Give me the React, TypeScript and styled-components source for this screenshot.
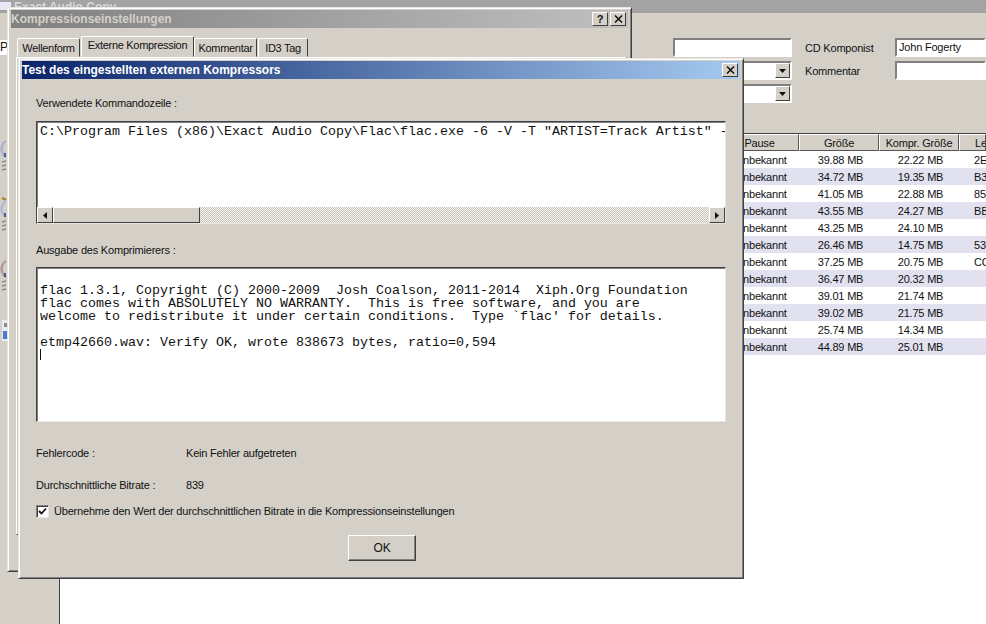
import { ReactElement } from 'react';
import styled, { createGlobalStyle } from 'styled-components';

const GlobalStyle = createGlobalStyle`
  html, body {
    margin: 0;
    padding: 0;
    background: #d4d0c8;
  }
  body {
    width: 986px;
    height: 624px;
    overflow: hidden;
    font-family: "Liberation Sans", Arial, sans-serif;
    font-size: 11px;
    letter-spacing: -0.2px;
    color: #111;
  }
`;

const Desktop = styled.div`
  position: relative;
  width: 986px;
  height: 624px;
  overflow: hidden;
  background: #d4d0c8;
`;

/* background window */
const MainWindow = styled.div`
  display: flex;
  flex-direction: column;
  height: 100%;
`;

const MainTitle = styled.div`
  height: 13px;
  flex: none;
  display: flex;
  align-items: center;
  gap: 3px;
  background: #a3a3a3;
  color: #d8d8d8;
  font-size: 12px;
  font-weight: 700;
  letter-spacing: 0;
  overflow: hidden;
`;

const MainBody = styled.div`
  flex: 1;
  display: flex;
  min-height: 0;
`;

const Sidebar = styled.div`
  width: 59px;
  flex: none;
  display: flex;
  flex-direction: column;
  overflow: hidden;
`;

const SideField = styled.div`
  width: 7px;
  height: 15px;
  margin-top: 27px;
  background: #fff;
  font-size: 12px;
  line-height: 15px;
`;

const SideIcons = styled.div`
  display: flex;
  flex-direction: column;
  gap: 22px;
  margin-top: 82px;
`;

const MainContent = styled.div`
  flex: 1;
  display: flex;
  flex-direction: column;
  min-width: 0;
`;

const FormArea = styled.div`
  height: 120px;
  box-sizing: border-box;
  flex: none;
  padding: 25px 0 0 614px;
  display: grid;
  grid-template-columns: 119px 13px 90px 91px;
  grid-template-rows: 19px 19px 19px;
  row-gap: 4px;
  align-items: center;
`;

const SunkenField = styled.div`
  height: 19px;
  box-sizing: border-box;
  background: #fff;
  border: 2px solid;
  border-color: #808080 #fff #fff #808080;
  padding-left: 2px;
  line-height: 15px;
  white-space: nowrap;
  overflow: hidden;
  display: flex;
  align-items: center;
  justify-content: flex-end;
`;

const FieldText = styled.span`
  flex: 1;
`;

const DropButton = styled.span`
  width: 15px;
  height: 15px;
  flex: none;
  background: #d4d0c8;
  border: 1px solid;
  border-color: #fff #404040 #404040 #fff;
  box-sizing: border-box;
  display: flex;
  align-items: center;
  justify-content: center;
`;

const FormLabel = styled.div`
  white-space: nowrap;
`;

const FormSpacer = styled.div`
  grid-column: span 3;
`;

const TrackList = styled.div`
  flex: 1;
  background: #fff;
  border-left: 1px solid #404040;
  border-top: 1px solid #404040;
`;

const TrackRowGrid = styled.div<{ $shade?: boolean }>`
  display: grid;
  grid-template-columns: 660px 79px 80px 80px 1fr;
  height: 17px;
  line-height: 17px;
  text-align: center;
  white-space: nowrap;
  overflow: hidden;
  background: ${p => (p.$shade ? '#e1e1f0' : '#fff')};
`;

const HeaderRow = styled(TrackRowGrid)`
  background: #d4d0c8;
  line-height: 17px;
`;

const HeaderCell = styled.div<{ $align?: 'left' | 'center' }>`
  box-sizing: border-box;
  border: 1px solid;
  border-color: #fff #555 #555 #fff;
  text-align: ${p => p.$align ?? 'center'};
  padding-left: ${p => (p.$align === 'left' ? '15px' : '0')};
  overflow: hidden;
`;

const Cell = styled.div<{ $align?: 'left' | 'center' }>`
  padding-top: 1px;
  text-align: ${p => p.$align ?? 'center'};
  padding-left: ${p => (p.$align === 'left' ? '15px' : '3px')};
`;

/* floating windows */
const Window = styled.div<{ $x: number; $y: number; $w: number; $h: number }>`
  position: absolute;
  left: ${p => p.$x}px;
  top: ${p => p.$y}px;
  width: ${p => p.$w}px;
  height: ${p => p.$h}px;
  box-sizing: border-box;
  background: #d4d0c8;
  border: 1px solid;
  border-color: #e8e6e0 #404040 #404040 #e8e6e0;
  box-shadow: inset 1px 1px 0 #fff, inset -1px -1px 0 #808080;
  padding: 2px 3px 3px;
  display: flex;
  flex-direction: column;
`;

const TitleBar = styled.div<{ $active?: boolean }>`
  height: 18px;
  flex: none;
  display: flex;
  align-items: center;
  justify-content: space-between;
  padding: 0 2px 0 0;
  font-size: 12px;
  font-weight: 700;
  letter-spacing: 0;
  white-space: nowrap;
  color: ${p => (p.$active ? '#fff' : '#d4d0c8')};
  background: ${p => (p.$active
    ? 'linear-gradient(90deg, #0a246a, #a6caf0)'
    : 'linear-gradient(90deg, #808080, #c0c0c0)')};
`;

const TitleButtons = styled.div`
  display: flex;
  gap: 2px;
`;

const CaptionButton = styled.div`
  width: 16px;
  height: 14px;
  box-sizing: border-box;
  background: #d4d0c8;
  border: 1px solid;
  border-color: #fff #404040 #404040 #fff;
  color: #111;
  display: flex;
  align-items: center;
  justify-content: center;
  font-size: 11px;
  font-weight: 700;
  line-height: 1;
`;

const TabStrip = styled.div`
  display: flex;
  align-items: flex-end;
  height: 21px;
  margin: 8px 0 0 6px;
`;

const Tab = styled.div<{ $w: number; $selected?: boolean }>`
  width: ${p => p.$w}px;
  height: ${p => (p.$selected ? 21 : 19)}px;
  box-sizing: border-box;
  margin-right: ${p => (p.$selected ? 0 : 1)}px;
  line-height: ${p => (p.$selected ? 17 : 19)}px;
  letter-spacing: -0.3px;
  text-align: center;
  background: #d4d0c8;
  border: 1px solid;
  border-color: #fff #404040 #d4d0c8 #fff;
  border-radius: 2px 2px 0 0;
  white-space: nowrap;
`;

const TabPage = styled.div`
  height: 476px;
  flex: none;
  margin: 0 1px 0 5px;
  border: 1px solid;
  border-color: #fff #404040 #404040 #fff;
`;

const DialogBody = styled.div`
  flex: 1;
  padding: 0 14px;
  display: flex;
  flex-direction: column;
`;

const Label = styled.div<{ $top: number }>`
  margin-top: ${p => p.$top}px;
  line-height: 13px;
  white-space: nowrap;
`;

const TextBox = styled.div<{ $h: number; $top: number }>`
  height: ${p => p.$h}px;
  margin-top: ${p => p.$top}px;
  width: 690px;
  box-sizing: border-box;
  flex: none;
  background: #fff;
  border: 1px solid;
  border-color: #404040 #e8e6e0 #e8e6e0 #404040;
  box-shadow: inset 1px 1px 0 #808080;
  display: flex;
  flex-direction: column;
  overflow: hidden;
`;

const CommandText = styled.pre`
  flex: 1;
  margin: 0;
  padding: 3px 0 0 3px;
  font-family: "Liberation Mono", "Courier New", monospace;
  font-size: 13.33px;
  letter-spacing: 0;
  line-height: 13px;
  overflow: hidden;
  color: #111;
`;

const OutputText = styled(CommandText)`
  padding: 16px 0 0 3px;
`;

const Caret = styled.span`
  display: block;
  width: 1px;
  height: 11px;
  background: #111;
`;

const ScrollBar = styled.div`
  height: 16px;
  flex: none;
  display: flex;
  background-image: repeating-conic-gradient(#c8c5be 0 25%, #f4f3f0 0 50%);
  background-size: 2px 2px;
`;

const ScrollButton = styled.div`
  width: 16px;
  flex: none;
  box-sizing: border-box;
  background: #d4d0c8;
  border: 1px solid;
  border-color: #fff #404040 #404040 #fff;
  display: flex;
  align-items: center;
  justify-content: center;
`;

const ScrollThumb = styled(ScrollButton)<{ $w: number }>`
  width: ${p => p.$w}px;
`;

const ScrollTrack = styled.div`
  flex: 1;
`;

const InfoRow = styled.div<{ $top: number }>`
  display: flex;
  margin-top: ${p => p.$top}px;
  line-height: 13px;
`;

const InfoLabel = styled.div`
  width: 150px;
  flex: none;
`;

const CheckRow = styled.div`
  display: flex;
  align-items: center;
  gap: 5px;
  margin-top: 13px;
  line-height: 13px;
`;

const CheckBox = styled.div`
  width: 13px;
  height: 13px;
  box-sizing: border-box;
  background: #fff;
  border: 1px solid;
  border-color: #808080 #e8e6e0 #e8e6e0 #808080;
  box-shadow: inset 1px 1px 0 #404040;
  display: flex;
  align-items: center;
  justify-content: center;
`;

const OkButton = styled.div`
  align-self: flex-start;
  margin: 17px 0 0 312px;
  width: 68px;
  height: 26px;
  box-sizing: border-box;
  background: #d4d0c8;
  border: 1px solid;
  border-color: #fff #404040 #404040 #fff;
  box-shadow: inset -1px -1px 0 #808080;
  display: flex;
  align-items: center;
  justify-content: center;
  font-size: 12px;
`;

const tracks = [
  ['39.88 MB', '22.22 MB', '2E'],
  ['34.72 MB', '19.35 MB', 'B3'],
  ['41.05 MB', '22.88 MB', '85'],
  ['43.55 MB', '24.27 MB', 'BB'],
  ['43.25 MB', '24.10 MB', ''],
  ['26.46 MB', '14.75 MB', '53'],
  ['37.25 MB', '20.75 MB', 'CC'],
  ['36.47 MB', '20.32 MB', ''],
  ['39.01 MB', '21.74 MB', ''],
  ['39.02 MB', '21.75 MB', ''],
  ['25.74 MB', '14.34 MB', ''],
  ['44.89 MB', '25.01 MB', ''],
];

const command = 'C:\\Program Files (x86)\\Exact Audio Copy\\Flac\\flac.exe -6 -V -T "ARTIST=Track Artist" -';

const output = `flac 1.3.1, Copyright (C) 2000-2009  Josh Coalson, 2011-2014  Xiph.Org Foundation
flac comes with ABSOLUTELY NO WARRANTY.  This is free software, and you are
welcome to redistribute it under certain conditions.  Type \`flac' for details.

etmp42660.wav: Verify OK, wrote 838673 bytes, ratio=0,594`;

function ArrowDown(): ReactElement {
  return (
    <svg width="7" height="4" viewBox="0 0 7 4"><path d="M0 0h7L3.5 4z" fill="#111" /></svg>
  );
}

function ArrowSide({ left }: { left?: boolean }): ReactElement {
  return (
    <svg width="4" height="7" viewBox="0 0 4 7">
      <path d={left ? 'M4 0v7L0 3.5z' : 'M0 0v7L4 3.5z'} fill="#111" />
    </svg>
  );
}

function CloseGlyph(): ReactElement {
  return (
    <svg width="9" height="8" viewBox="0 0 9 8">
      <path d="M1 0.5l7 7M8 0.5l-7 7" stroke="#111" strokeWidth="1.5" fill="none" />
    </svg>
  );
}

function DiscIcon({ tint, accent }: { tint: string; accent?: string }): ReactElement {
  return (
    <svg width="7" height="38" viewBox="0 0 7 38">
      {accent && <path d="M2 1l4 2" stroke={accent} strokeWidth="2.5" />}
      <path d="M6 4C2 6 1 11 2 15c1 2 2 4 4 5" stroke={tint} strokeWidth="2.5" fill="none" />
      <path d="M5 16v4" stroke="#2a3a80" strokeWidth="1.5" />
      <path d="M2 25l4-1M2 29l4-1M2 33l4-1" stroke="#8c8c8c" strokeWidth="1.3" />
    </svg>
  );
}

function SmallDoc(): ReactElement {
  return (
    <svg width="7" height="26" viewBox="0 0 7 26">
      <path d="M2 3h5v21H2z" fill="#e8ecf8" />
      <path d="M3 14h4v8H3z" fill="#4a7ad0" />
      <path d="M4 6h3v4H4z" fill="#8a8a8a" />
    </svg>
  );
}

export default function App(): ReactElement {
  return (
    <Desktop>
      <GlobalStyle />

      <MainWindow>
        <MainTitle>
          <svg width="11" height="11" viewBox="0 0 11 11"><rect y="1" width="11" height="8" fill="#e8e8f4" /></svg>
          Exact Audio Copy
        </MainTitle>
        <MainBody>
          <Sidebar>
            <SideField>P</SideField>
            <SideIcons>
              <DiscIcon tint="#aab4cc" />
              <DiscIcon tint="#b0b8d8" accent="#a08a30" />
              <DiscIcon tint="#b09a9a" />
              <SmallDoc />
            </SideIcons>
          </Sidebar>
          <MainContent>
            <FormArea>
              <SunkenField />
              <span />
              <FormLabel>CD Komponist</FormLabel>
              <SunkenField><FieldText>John Fogerty</FieldText></SunkenField>

              <SunkenField><DropButton><ArrowDown /></DropButton></SunkenField>
              <span />
              <FormLabel>Kommentar</FormLabel>
              <SunkenField />

              <SunkenField><DropButton><ArrowDown /></DropButton></SunkenField>
              <FormSpacer />
            </FormArea>
            <TrackList>
              <HeaderRow>
                <HeaderCell />
                <HeaderCell>Pause</HeaderCell>
                <HeaderCell>Größe</HeaderCell>
                <HeaderCell>Kompr. Größe</HeaderCell>
                <HeaderCell $align="left">Le</HeaderCell>
              </HeaderRow>
              {tracks.map((t, i) => (
                <TrackRowGrid key={t[0]} $shade={i % 2 === 1}>
                  <Cell />
                  <Cell>Unbekannt</Cell>
                  <Cell>{t[0]}</Cell>
                  <Cell>{t[1]}</Cell>
                  <Cell $align="left">{t[2]}</Cell>
                </TrackRowGrid>
              ))}
            </TrackList>
          </MainContent>
        </MainBody>
      </MainWindow>

      <Window $x={7} $y={7} $w={625} $h={565}>
        <TitleBar>
          Kompressionseinstellungen
          <TitleButtons>
            <CaptionButton>?</CaptionButton>
            <CaptionButton><CloseGlyph /></CaptionButton>
          </TitleButtons>
        </TitleBar>
        <TabStrip>
          <Tab $w={63}>Wellenform</Tab>
          <Tab $w={113} $selected>Externe Kompression</Tab>
          <Tab $w={63}>Kommentar</Tab>
          <Tab $w={50}>ID3 Tag</Tab>
        </TabStrip>
        <TabPage />
      </Window>

      <Window $x={18} $y={58} $w={726} $h={521}>
        <TitleBar $active>
          Test des eingestellten externen Kompressors
          <CaptionButton><CloseGlyph /></CaptionButton>
        </TitleBar>
        <DialogBody>
          <Label $top={18}>Verwendete Kommandozeile :</Label>
          <TextBox $h={103} $top={11}>
            <CommandText>{command}</CommandText>
            <ScrollBar>
              <ScrollButton><ArrowSide left /></ScrollButton>
              <ScrollThumb $w={147} />
              <ScrollTrack />
              <ScrollButton><ArrowSide /></ScrollButton>
            </ScrollBar>
          </TextBox>
          <Label $top={20}>Ausgabe des Komprimierers :</Label>
          <TextBox $h={155} $top={10}>
            <OutputText>{output}<Caret /></OutputText>
          </TextBox>
          <InfoRow $top={25}>
            <InfoLabel>Fehlercode :</InfoLabel>
            Kein Fehler aufgetreten
          </InfoRow>
          <InfoRow $top={19}>
            <InfoLabel>Durchschnittliche Bitrate :</InfoLabel>
            839
          </InfoRow>
          <CheckRow>
            <CheckBox>
              <svg width="9" height="9" viewBox="0 0 9 9">
                <path d="M1 4l2.5 2.5L8 1.5" stroke="#111" strokeWidth="1.8" fill="none" />
              </svg>
            </CheckBox>
            Übernehme den Wert der durchschnittlichen Bitrate in die Kompressionseinstellungen
          </CheckRow>
          <OkButton>OK</OkButton>
        </DialogBody>
      </Window>
    </Desktop>
  );
}
